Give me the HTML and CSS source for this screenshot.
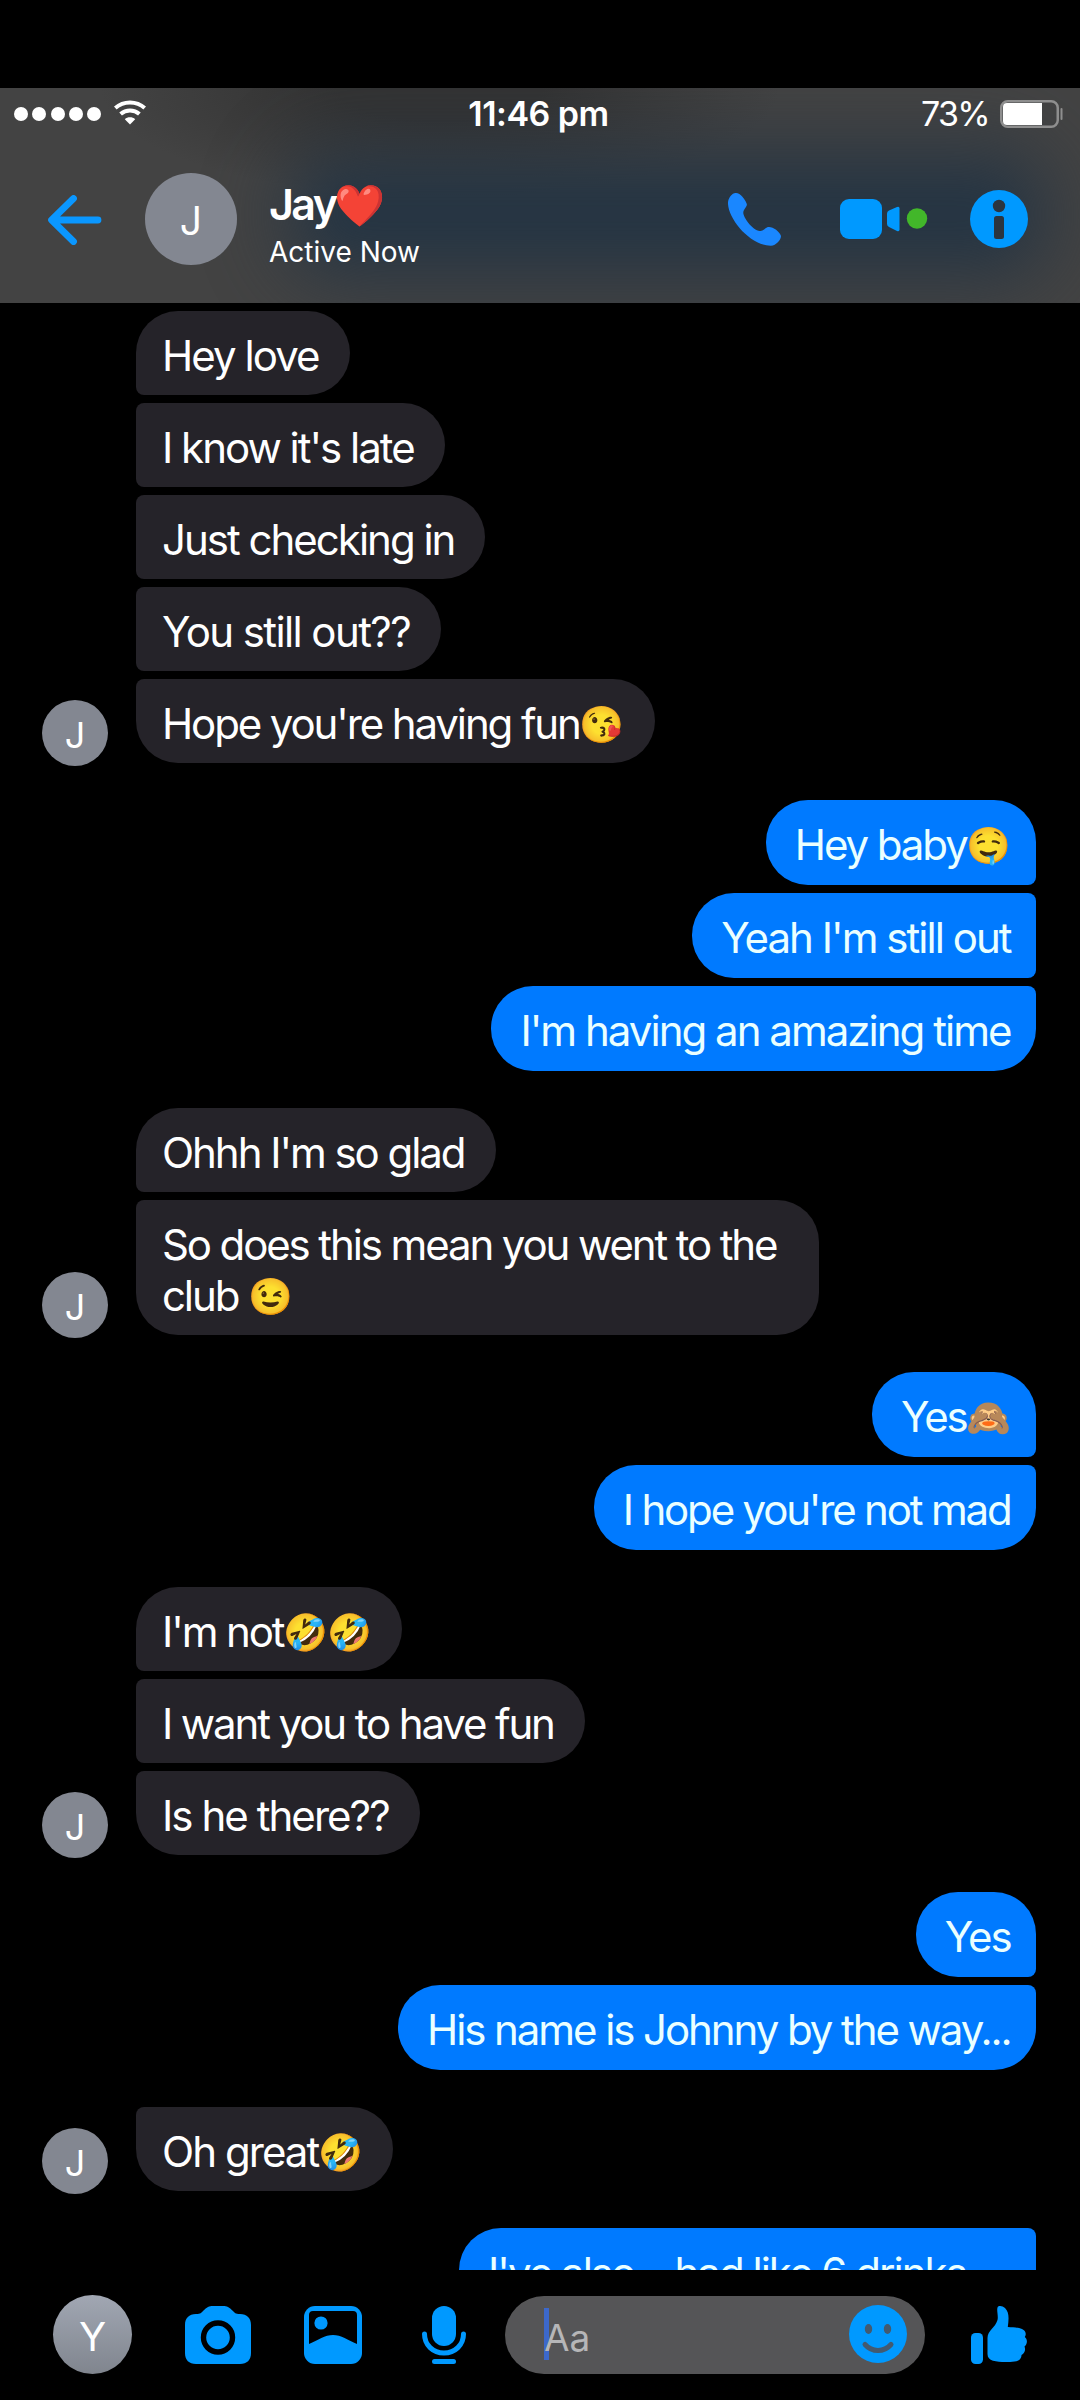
FILE: index.html
```html
<!DOCTYPE html>
<html lang="en">
<head>
<meta charset="utf-8">
<title>Jay</title>
<link rel="stylesheet" href="styles.css">
</head>
<body>
<div class="app">
  <header class="header">
    <div class="status">
      <div class="signal">
        <div class="dots"><i></i><i></i><i></i><i></i><i></i></div>
        <svg class="wifi" width="32" height="25" viewBox="0 0 32 25" fill="none" stroke="#fff" stroke-width="4">
          <path d="M1.3 8C9.500 .6 22.500 .6 30.700 8"/>
          <path d="M6.600 14C12 9.200 20 9.200 25.400 14"/>
          <path d="M16 24.500l-5.200-5.300c2.800-2.600 7.600-2.600 10.400 0z" fill="#fff" stroke="none"/>
        </svg>
      </div>
      <div class="time">11:46 pm</div>
      <div class="power">
        <span>73%</span>
        <svg width="63" height="28" viewBox="0 0 63 28">
          <rect x="1.250" y="1.250" width="56.500" height="25.500" rx="6.500" fill="none" stroke="#8e8e8e" stroke-width="2.500"/>
          <path d="M7 3H42V25H7Q3 25 3 21V7Q3 3 7 3Z" fill="#fff"/>
          <rect x="60.500" y="8" width="2" height="12" rx="1" fill="#8e8e8e"/>
        </svg>
      </div>
    </div>
    <div class="bar">
      <svg class="back" width="54" height="50" viewBox="0 0 54 50" fill="none" stroke="#0a97ff" stroke-width="6.800" stroke-linecap="round" stroke-linejoin="round">
        <path d="M25.500 3.500L3.600 25L25.500 46.500M4 25H50"/>
      </svg>
      <div class="avatar avatar-lg">J</div>
      <div class="who">
        <div class="name">Jay<span class="emoji">❤️</span></div>
        <div class="presence">Active Now</div>
      </div>
      <div class="actions">
        <svg width="53" height="53" viewBox="0 0 53 53" fill="#1a87ff">
          <path d="M0 9C1 4 4 .5 7.500 .1C12-.5 17 6 18.800 11C19.500 13.500 15.500 16.500 15.300 19.500C15 24 24 37 32 38C36 38.300 37 34 41 34C45.500 34 51.500 38.500 53 43C53 47 48 52.500 43 52.700C22 53-1 25 0 9Z"/>
        </svg>
        <svg class="video" width="88" height="40" viewBox="0 0 88 40" fill="#0099ff">
          <rect width="42" height="40" rx="9"/>
          <path d="M47 14.500Q47 12.500 49 11.500L57 8Q59.500 7 59.500 9.500V30.500Q59.500 33 57 32L49 28Q47 27 47 25Z"/>
          <circle cx="77" cy="19.500" r="10.200" fill="#42b72a"/>
        </svg>
        <svg width="58" height="58" viewBox="0 0 58 58">
          <circle cx="29" cy="29" r="29" fill="#0099ff"/>
          <circle cx="29" cy="16" r="6.200" fill="#2b3540"/>
          <rect x="24" y="26" width="10" height="23" rx="2.500" fill="#2b3540"/>
        </svg>
      </div>
    </div>
  </header>

  <main class="chat">
    <section class="group received">
      <div class="avatar">J</div>
      <div class="stack">
        <p class="bubble soft">Hey love</p>
        <p class="bubble">I know it's late</p>
        <p class="bubble">Just checking in</p>
        <p class="bubble loose">You still out??</p>
        <p class="bubble tighter">Hope you're having fun<span class="emoji">😘</span></p>
      </div>
    </section>
    <section class="group sent">
      <div class="stack">
        <p class="bubble">Hey baby<span class="emoji">🤤</span></p>
        <p class="bubble tight">Yeah I'm still out</p>
        <p class="bubble tight">I'm having an amazing time</p>
      </div>
    </section>
    <section class="group received">
      <div class="avatar">J</div>
      <div class="stack">
        <p class="bubble tight">Ohhh I'm so glad</p>
        <p class="bubble wide tighter">So does this mean you went to the club <span class="emoji">😉</span></p>
      </div>
    </section>
    <section class="group sent">
      <div class="stack">
        <p class="bubble">Yes<span class="emoji">🙈</span></p>
        <p class="bubble tightest">I hope you're not mad</p>
      </div>
    </section>
    <section class="group received">
      <div class="avatar">J</div>
      <div class="stack">
        <p class="bubble tighter">I'm not<span class="emoji">🤣</span><span class="emoji">🤣</span></p>
        <p class="bubble tighter">I want you to have fun</p>
        <p class="bubble soft">Is he there??</p>
      </div>
    </section>
    <section class="group sent">
      <div class="stack">
        <p class="bubble">Yes</p>
        <p class="bubble">His name is Johnny by the way...</p>
      </div>
    </section>
    <section class="group received">
      <div class="avatar">J</div>
      <div class="stack single">
        <p class="bubble soft">Oh great<span class="emoji">🤣</span></p>
      </div>
    </section>
    <section class="group sent">
      <div class="stack single">
        <p class="bubble long tight">I've also... had like 6 drinks</p>
      </div>
    </section>
  </main>

  <footer class="composer">
    <div class="avatar avatar-me">Y</div>
    <svg class="camera" width="66" height="58" viewBox="0 0 66 58" fill="#0099ff">
      <path d="M11 8C16 8 16 7 18 5C22 1 24 0 28 0H38C42 0 44 1 48 5C50 7 50 8 55 8C62 8 66 12 66 19V47C66 54 62 58 55 58H11C4 58 0 54 0 47V19C0 12 4 8 11 8Z"/>
      <circle cx="33" cy="31.500" r="14.500" fill="none" stroke="#000" stroke-width="5.400"/>
    </svg>
    <svg class="photo" width="58" height="58" viewBox="0 0 58 58" fill="#0099ff">
      <rect width="58" height="58" rx="11"/>
      <path d="M5 9Q5 5 9 5H49Q53 5 53 9V38C44 34 37 29 29 29S14 34 5 38Z" fill="#000"/>
      <circle cx="17" cy="17" r="6.600"/>
    </svg>
    <svg class="mic" width="44" height="58" viewBox="0 0 44 58" fill="#0099ff">
      <rect x="10" width="24" height="40" rx="12"/>
      <path d="M2.500 28C2.500 39 11 47 22 47S41.500 39 41.500 28" fill="none" stroke="#0099ff" stroke-width="5" stroke-linecap="round"/>
      <rect x="10" y="53" width="24" height="5" rx="2.500"/>
    </svg>
    <div class="field">
      <div class="entry"><i class="caret"></i><span class="hint">Aa</span></div>
      <svg width="58" height="58" viewBox="0 0 58 58">
        <circle cx="29" cy="29" r="29" fill="#0099ff"/>
        <g fill="#435a70"><ellipse cx="19.500" cy="24" rx="3.700" ry="5"/><ellipse cx="38.500" cy="24" rx="3.700" ry="5"/></g>
        <path d="M16 39.500C23 47.500 35 47.500 42 39.500" fill="none" stroke="#435a70" stroke-width="5" stroke-linecap="round"/>
      </svg>
    </div>
    <svg class="like" width="56" height="58" viewBox="0 0 56 58" fill="#0099ff">
      <rect y="27" width="12" height="31" rx="4.500"/>
      <path d="M26.500 1.500C27.500-.8 31.500-.3 34 2C38.500 6.500 37.800 13 36.800 21C42 21.500 47 21.300 51 23C54.500 24.500 55.800 28 53.800 31C56.800 33.500 56.500 38 53.500 40.500C55 44 53.500 47.500 50.500 49C50.500 53 47.500 55.300 43.500 55.500C37 56.300 28 56.300 22 54.800C18.500 53.800 16.500 51.500 16.500 48V32C16.500 24.500 24.500 21.500 26.500 14C27.500 9.500 25.500 5 26.500 1.500Z"/>
    </svg>
  </footer>
</div>
</body>
</html>
```
FILE: styles.css
```css
* { box-sizing: border-box; }

body {
  margin: 0;
  background: #000;
  color: #fff;
  font-family: Inter, "Noto Color Emoji", sans-serif;
}

svg { display: block; flex: none; }

.app {
  display: flex;
  flex-direction: column;
  width: 1080px;
  height: 2400px;
  padding-top: 88px;
  overflow: hidden;
}

/* header */
.header {
  position: relative;
  flex: none;
  height: 215px;
  overflow: hidden;
  background: radial-gradient(ellipse 340px 110px at 440px 0, #333 30%, rgba(51, 51, 51, 0) 100%) #434343;
}

.header::before {
  content: "";
  position: absolute;
  left: 310px;
  top: 84px;
  width: 715px;
  height: 84px;
  border-radius: 40px;
  background: #263543;
  box-shadow: 0 0 44px 40px rgba(38, 53, 67, .55);
  filter: blur(24px);
}

.status {
  position: relative;
  display: grid;
  grid-template-columns: 1fr auto 1fr;
  align-items: center;
  height: 50px;
  padding: 1px 17px 0 14px;
  font-size: 34px;
  line-height: 49px;
}

.signal { display: flex; align-items: center; gap: 13px; }
.dots { display: flex; gap: 4.300px; }
.dots i { width: 14px; height: 14px; border-radius: 50%; background: #fff; }
.wifi { margin-bottom: 2px; }
.time { font-weight: 600; letter-spacing: -.5px; }
.power { display: flex; align-items: center; justify-content: flex-end; gap: 11px; letter-spacing: -1.700px; }

.bar {
  position: relative;
  display: flex;
  align-items: center;
  height: 162px;
  padding: 0 52px 0 48px;
}

.back { margin: 2px 43px 0 0; }

.avatar {
  flex: none;
  width: 66px;
  height: 66px;
  border-radius: 50%;
  background: #838791;
  font-size: 36px;
  line-height: 70px;
  text-align: center;
}

.avatar-lg { width: 92px; height: 92px; font-size: 39px; line-height: 96px; }

.who { margin: 12px 0 0 32px; }
.name { font-size: 43px; font-weight: 600; line-height: 50px; letter-spacing: -2.600px; white-space: nowrap; }
.name .emoji { font-size: 41px; line-height: 41px; vertical-align: 0; margin-left: -1px; }
.presence { margin-top: 4px; font-size: 28px; line-height: 38px; }

.actions { display: flex; align-items: center; margin-left: auto; }
.video { margin: 0 42px 0 59px; }

/* conversation */
.chat {
  display: flex;
  flex-direction: column;
  flex: none;
  gap: 37px;
  height: 1967px;
  padding: 8px 44px 0 42px;
  overflow: hidden;
}

.group { display: flex; flex: none; align-items: flex-end; gap: 28px; }
.group .avatar { margin-bottom: -3px; }
.stack { display: flex; flex-direction: column; gap: 8px; }
.received .stack { align-items: flex-start; }
.sent { justify-content: flex-end; }
.sent .stack { align-items: flex-end; }

.bubble {
  margin: 0;
  font-size: 42px;
  line-height: 51px;
  white-space: nowrap;
}

.received .bubble {
  padding: 19px 31px 14px 26px;
  border-radius: 8px 42px 42px 8px;
  background: #252329;
  letter-spacing: -2px;
}

.sent .bubble {
  padding: 19px 25.500px 15px 29px;
  border-radius: 42px 8px 8px 42px;
  background: #007aff;
  color: #eaffff;
  letter-spacing: -2.080px;
}

.received .stack:not(.single) .bubble:first-child { border-top-left-radius: 42px; }
.received .bubble:last-child { border-bottom-left-radius: 42px; }
.sent .stack:not(.single) .bubble:first-child { border-top-right-radius: 42px; }
.sent .bubble:last-child { border-bottom-right-radius: 42px; }

.received .loose { letter-spacing: -1.600px; }
.received .soft { letter-spacing: -1.950px; }
.received .tight { letter-spacing: -2.050px; }
.received .tighter { letter-spacing: -2.120px; }
.sent .tight { letter-spacing: -1.980px; }
.sent .tightest { letter-spacing: -2.180px; }
.group .wide { width: 683px; white-space: normal; }
.group .long { width: 577px; }

.emoji {
  margin: 0 -1px 0 0;
  font-family: "Noto Color Emoji", sans-serif;
  font-size: 36px;
  line-height: 36px;
  letter-spacing: 0;
  vertical-align: 2px;
}

/* composer */
.composer { display: flex; flex: none; align-items: flex-start; padding: 25px 53px 0; }
.avatar-me {
  width: 79px;
  height: 79px;
  background: linear-gradient(#a1a7b3, #80858e);
  font-size: 40px;
  line-height: 83px;
}
.camera { margin: 11px 53px 0; }
.photo { margin: 11px 60px 0 0; }
.mic { margin: 11px 39px 0 0; }
.field {
  display: flex;
  align-items: center;
  justify-content: space-between;
  width: 420px;
  height: 78px;
  margin-top: 1px;
  padding: 0 18px 2px 39px;
  border-radius: 39px;
  background: #555557;
}
.entry { display: flex; align-items: center; }
.caret { width: 5px; height: 52px; background: #3c68cb; }
.hint { position: relative; margin: 7px 0 0 -5px; font-size: 37px; line-height: 46px; color: #b6b6b8; }
.like { margin: 11px 0 0 46px; }
```
